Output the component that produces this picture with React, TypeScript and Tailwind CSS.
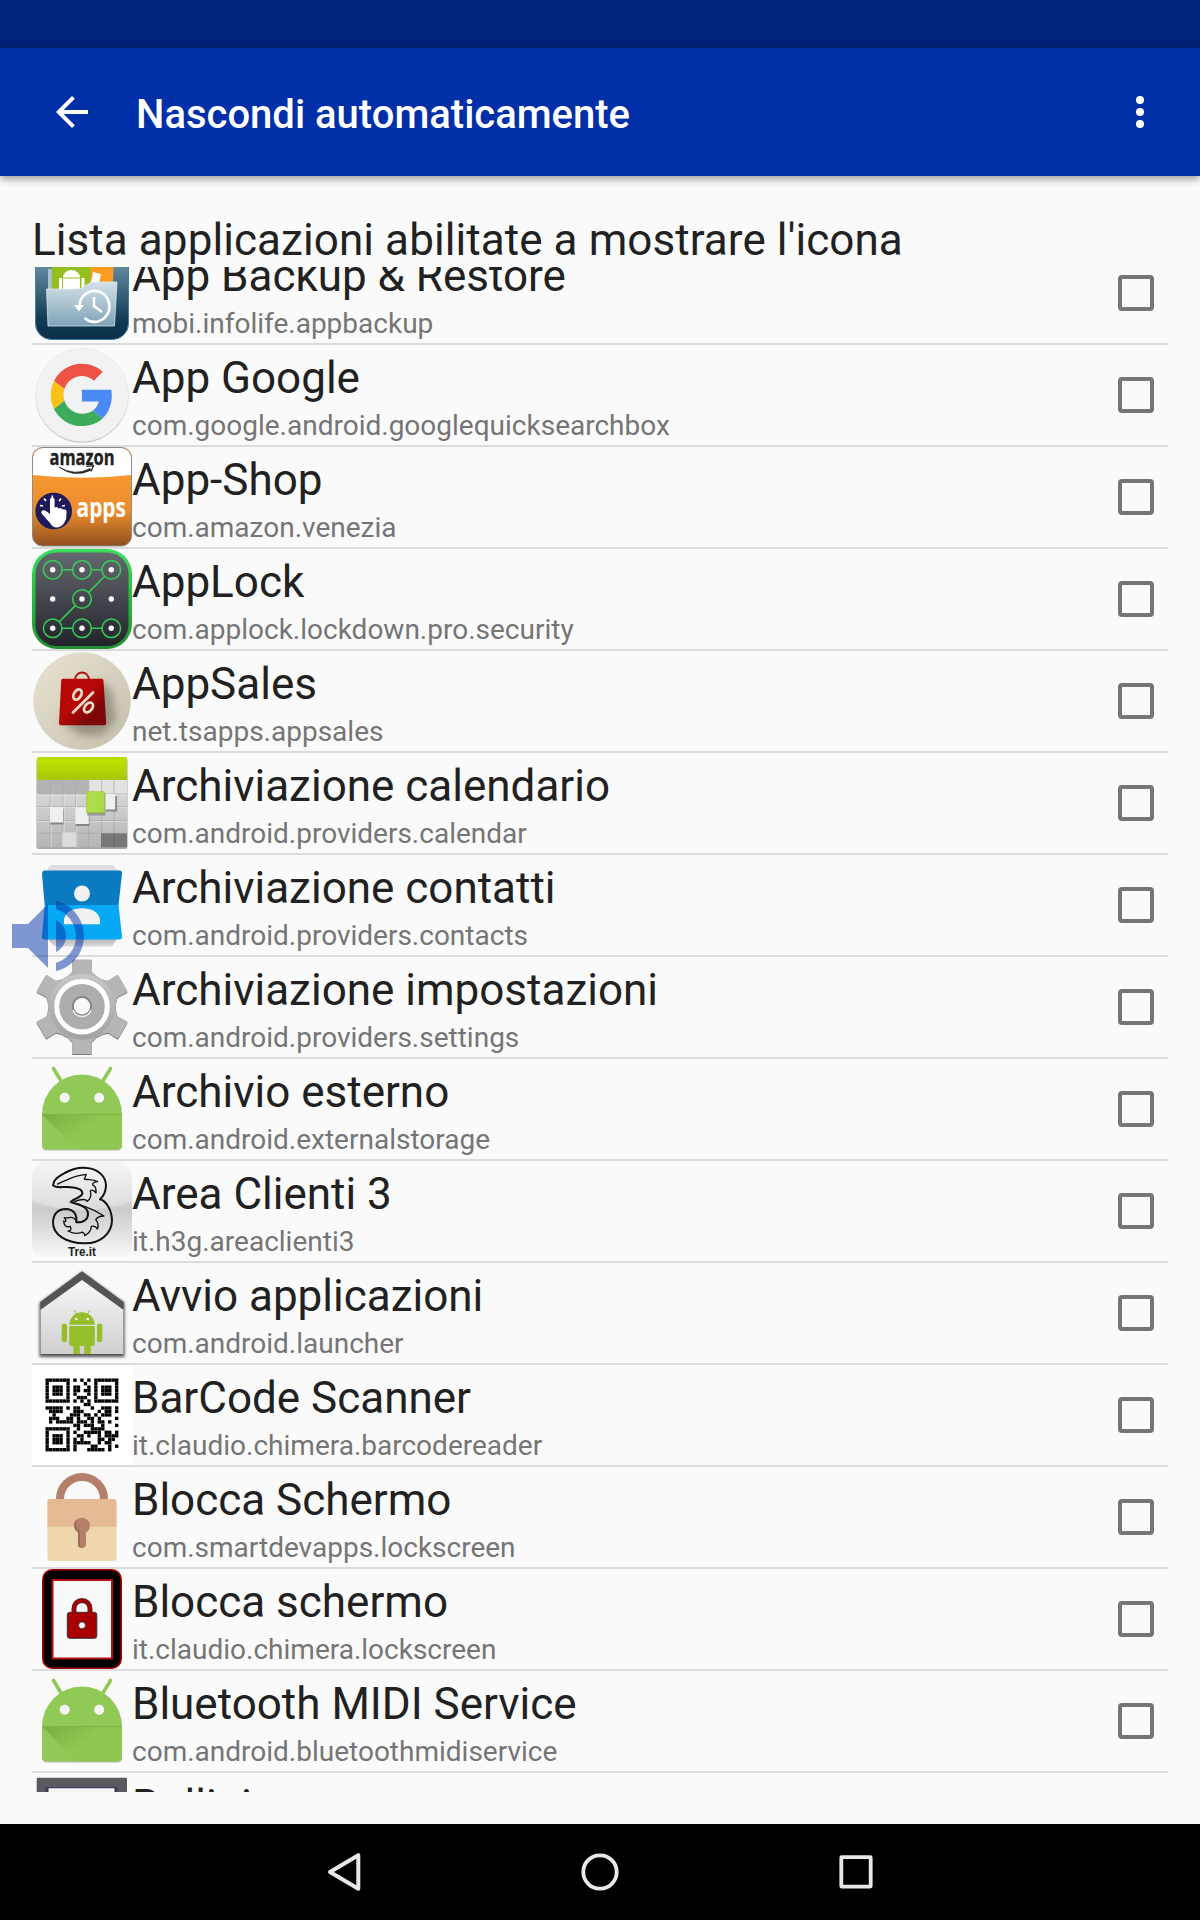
import React from 'react';

const BackupIcon = () => (
  <svg viewBox="0 0 100 100" className="w-full h-full">
    <defs>
      <linearGradient id="bkBg" x1="0" y1="0" x2="0" y2="1">
        <stop offset="0.2" stopColor="#648a9f" />
        <stop offset="0.8" stopColor="#0f3a52" />
        <stop offset="1" stopColor="#0a3048" />
      </linearGradient>
      <linearGradient id="bkFolder" x1="0" y1="0" x2="0" y2="1">
        <stop offset="0" stopColor="#d3e1e8" />
        <stop offset="1" stopColor="#7fa3b8" />
      </linearGradient>
    </defs>
    <rect x="3.500" y="3.500" width="93" height="93" rx="16" fill="url(#bkBg)" stroke="#3f7f9f" strokeWidth="1" />
    <path d="M16 26h6v24h-6z" fill="#a9c2cd" />
    <path d="M19.700 10H60v38H19.700z" fill="#94bd20" />
    <path d="M60 10h22l-1 30H58z" fill="#ff9b21" />
    <path d="M61 29l8 2-3 14h-8z" fill="#fff" />
    <path d="M31 34.500a8.500 7.500 0 0 1 17 0zM31 35.500h17v12H31zM27 35h3v11h-3zM49.500 35h3v11h-3z" fill="#fff" />
    <path d="M14.500 46h31l4-1 10-6h25.500l-2.500 44H16z" fill="url(#bkFolder)" stroke="#e5eff4" strokeWidth="0.7" />
    <path d="M47.500 62a15 15.500 0 1 1 5 13" fill="none" stroke="#fff" strokeWidth="2.600" />
    <path d="M42 62h10l-5 6.500z" fill="#fff" />
    <path d="M62 54v9l8 6" fill="none" stroke="#fff" strokeWidth="2.600" />
  </svg>
);

const GoogleIcon = () => (
  <svg viewBox="0 0 100 100" className="w-full h-full">
    <circle cx="50" cy="51.200" r="46.500" fill="#c4c4c4" />
    <circle cx="50" cy="50" r="46.500" fill="#f2f2f2" stroke="#e4e4e4" strokeWidth="0.600" />
    <g transform="translate(18.700 18.700) scale(1.300)">
      <path fill="#ee5145" d="M24 9.500c3.540 0 6.710 1.220 9.210 3.600l6.850-6.850C35.900 2.380 30.470 0 24 0 14.620 0 6.510 5.380 2.560 13.220l7.980 6.190C12.430 13.720 17.740 9.500 24 9.500z" />
      <path fill="#4a8af4" d="M46.980 24.550c0-1.570-.15-3.090-.38-4.550H24v9.020h12.940c-.58 2.960-2.260 5.480-4.780 7.180l7.730 6c4.510-4.180 7.090-10.360 7.090-17.650z" />
      <path fill="#fbc117" d="M10.530 28.590c-.48-1.450-.76-2.990-.76-4.590s.27-3.140.76-4.590l-7.980-6.190C.92 16.460 0 20.120 0 24c0 3.880.92 7.540 2.560 10.780l7.970-6.190z" />
      <path fill="#3cab5b" d="M24 48c6.480 0 11.930-2.130 15.890-5.810l-7.730-6c-2.150 1.450-4.920 2.300-8.160 2.300-6.260 0-11.570-4.220-13.470-9.910l-7.980 6.190C6.510 42.620 14.620 48 24 48z" />
    </g>
  </svg>
);

const AmazonIcon = () => (
  <svg viewBox="0 0 100 100" className="w-full h-full">
    <defs>
      <linearGradient id="amzBg" x1="0" y1="0" x2="0" y2="1">
        <stop offset="0.3" stopColor="#f8972f" />
        <stop offset="0.65" stopColor="#e98c2e" />
        <stop offset="1" stopColor="#91501f" />
      </linearGradient>
    </defs>
    <rect x="0.500" y="0.500" width="99" height="98.500" rx="10" fill="url(#amzBg)" />
    <path d="M1 28V11A10 10 0 0 1 11 1h78a10 10 0 0 1 10 10v17Q50 33.500 1 28z" fill="#fff" />
    <rect x="0.500" y="0.500" width="99" height="98.500" rx="10" fill="none" stroke="#8b8b8b" strokeWidth="1" />
    <text x="17.500" y="18" textLength="65" lengthAdjust="spacingAndGlyphs" className="font-['Open_Sans'] font-bold" fontSize="21.500" fill="#222" stroke="#222" strokeWidth="0.400">amazon</text>
    <path d="M27 20q16 9.500 31 1.500l1 1.800q-17 8-32-3.300z" fill="#222" stroke="#222" strokeWidth="0.600" />
    <path d="M54.500 19.300l7-.6-2.500 5.800" fill="none" stroke="#222" strokeWidth="1.300" />
    <circle cx="21.700" cy="64" r="18.300" fill="#1f1b5b" />
    <path d="M18 76l-8-9c-2-3 1-5 4-3l4 3V52q2.300-3 4.600 0v9q2-2 4 .500 2.500-1.500 4 1 3-1 4 1.500l-.500 8q-3 8-9 8.500-4 .500-7.100-4.500z" fill="#fff" />
    <path d="M20.300 52v-3.500M14 54l-2-2.500M27 54l2-2.500M11 59l-3-.500M30 59l3-.500" stroke="#fff" strokeWidth="1.700" fill="none" />
    <text x="44.500" y="70" textLength="49.500" lengthAdjust="spacingAndGlyphs" className="font-['Open_Sans'] font-bold" fontSize="26.500" fill="#fff">apps</text>
  </svg>
);

const AppLockIcon = () => {
  const p = [20.7, 50, 79.3];
  return (
    <svg viewBox="0 0 100 100" className="w-full h-full">
      <defs>
        <linearGradient id="alRim" x1="0" y1="0" x2="0" y2="1">
          <stop offset="0" stopColor="#3ade5a" />
          <stop offset="1" stopColor="#1f8f31" />
        </linearGradient>
        <linearGradient id="alBg" x1="0" y1="0" x2="0" y2="1">
          <stop offset="0" stopColor="#666870" />
          <stop offset="1" stopColor="#23242b" />
        </linearGradient>
      </defs>
      <rect width="100" height="100" rx="25" fill="url(#alRim)" />
      <rect x="3.500" y="3.500" width="93" height="93.500" rx="21" fill="url(#alBg)" />
      <g fill="none" stroke="#35cf55" strokeWidth="1.500">
        {p.map(x => <circle key={x} cx={x} cy="20.700" r="9.300" />)}
        {p.map(x => <circle key={x} cx={x} cy="79.300" r="9.300" />)}
        <circle cx="50" cy="50" r="9.300" />
        <path d="M30 20.700h10.700M59.300 20.700H70M30 79.300h10.700M59.300 79.300H70M72.700 27.300L56.600 43.400M43.400 56.600L27.300 72.700" />
      </g>
      {p.map(y => p.map(x => <circle key={`${x}-${y}`} cx={x} cy={y} r="2.700" fill="#fff" />))}
    </svg>
  );
};

const AppSalesIcon = () => (
  <svg viewBox="0 0 100 100" className="w-full h-full">
    <defs>
      <linearGradient id="asBg" x1="0" y1="0" x2="1" y2="1">
        <stop offset="0.2" stopColor="#e2dccb" />
        <stop offset="1" stopColor="#c5bfae" />
      </linearGradient>
      <linearGradient id="asBag" x1="0" y1="0" x2="1" y2="1">
        <stop offset="0.45" stopColor="#b80707" />
        <stop offset="0.75" stopColor="#7d0606" />
      </linearGradient>
      <filter id="asSoft" x="-40%" y="-40%" width="180%" height="180%">
        <feGaussianBlur stdDeviation="4" />
      </filter>
    </defs>
    <circle cx="50" cy="50" r="48.700" fill="url(#asBg)" />
    <path d="M68 30l11 9 5 30-14 15H48L29 70z" fill="#6b6452" opacity="0.550" filter="url(#asSoft)" />
    <path d="M43 29a7 7.500 0 0 1 14 0" fill="none" stroke="#b01212" strokeWidth="1.800" />
    <path d="M31 27.700h38.500q2 0 2 2l2.700 42.600q0 2-2 2H29q-2.200 0-2-2l2.200-42.600q0-2 1.800-2z" fill="url(#asBag)" />
    <g fill="none" stroke="#e8dcc8" strokeWidth="2.800">
      <path d="M61 41.500L41 61.500" strokeLinecap="round" />
      <ellipse cx="45.500" cy="43.500" rx="3.600" ry="5.500" transform="rotate(30 45.500 43.500)" />
      <ellipse cx="56.500" cy="56.500" rx="3.600" ry="5.500" transform="rotate(40 56.500 56.500)" />
    </g>
  </svg>
);

const CalendarIcon = () => (
  <svg viewBox="0 0 100 100" className="w-full h-full">
    <defs>
      <linearGradient id="calTop" x1="0" y1="0" x2="0" y2="1">
        <stop offset="0" stopColor="#b3d600" />
        <stop offset="0.15" stopColor="#c0e200" />
        <stop offset="1" stopColor="#a3c708" />
      </linearGradient>
      <linearGradient id="calBody" x1="0" y1="0" x2="0" y2="1">
        <stop offset="0" stopColor="#dedede" />
        <stop offset="1" stopColor="#b5b5b5" />
      </linearGradient>
    </defs>
    <rect x="4.500" y="5" width="91" height="91" rx="2.500" fill="#a5a5a5" />
    <rect x="5" y="27" width="90" height="67.500" fill="url(#calBody)" />
    <path d="M5 27h51.700v14H5z" fill="#b3b3b3" />
    <path d="M56.700 27H95v14H56.700z" fill="#e3e3e3" />
    <path d="M18.300 27v67M31 27v67M43.700 27v67M56.700 27v67M69.700 27v67M82 27v67M5 41h90M5 53.700h90M5 67.700h90M5 80.300h90" stroke="#a9a9a9" strokeWidth="0.800" fill="none" />
    <path d="M5 42h90M5 54.700h90M5 68.700h90M19.200 41v53M32 41v53M44.700 41v53" stroke="#ededed" strokeWidth="0.600" fill="none" />
    <path d="M7 4h86q2 0 2 2v21H5V6q0-2 2-2z" fill="url(#calTop)" />
    <rect x="69" y="80.300" width="26" height="14" fill="#777" />
    <path d="M82 80.300v14" stroke="#666" strokeWidth="0.800" />
    <g fill="#858585">
      <rect x="18.500" y="56" width="13" height="15.500" />
      <rect x="44" y="57" width="13.500" height="16" />
      <rect x="74" y="43" width="11" height="15.500" />
    </g>
    <g fill="#efefef">
      <rect x="18" y="54" width="13" height="15.500" />
      <rect x="43.300" y="54.500" width="13.500" height="16.500" />
      <rect x="72.700" y="41" width="10.500" height="15.500" />
      <rect x="30.300" y="79.300" width="13.500" height="14.500" fill="#dcdcdc" />
    </g>
    <rect x="55" y="40.500" width="18.500" height="22" fill="#787878" opacity="0.600" />
    <rect x="54.700" y="38.700" width="17.500" height="21" fill="#addb4c" stroke="#9ccb2f" strokeWidth="0.800" />
  </svg>
);

const ContactsIcon = () => (
  <svg viewBox="0 0 100 100" className="w-full h-full">
    <defs>
      <linearGradient id="ctBack" x1="0" y1="0" x2="0" y2="1">
        <stop offset="0.88" stopColor="#a9a9a9" />
        <stop offset="1" stopColor="#dcdcdc" />
      </linearGradient>
    </defs>
    <path d="M20 10h60l5 6v68l-5 7.500H22L16 84V16z" fill="url(#ctBack)" />
    <path d="M20 10h60q3 1 5 6H15q2-5 5-6z" fill="#dfdfdf" />
    <path d="M12 15.500h76q2.500.500 2 3.500L86.500 50h-73.800L10 19q-.200-3 2-3.500z" fill="#0b7bc1" />
    <path d="M12.700 50h73.800l3.500 31q.300 3-2 3.500H12q-2.300-.500-2-3.500z" fill="#08a9f4" />
    <circle cx="50" cy="38.500" r="8" fill="#f1f1f1" />
    <path d="M32 69.300V64q3-10.500 18-10.700Q65 53.500 68 64v5.300z" fill="#f1f1f1" />
  </svg>
);

const GearIcon = () => (
  <svg viewBox="0 0 100 100" className="w-full h-full">
    <defs>
      <linearGradient id="gearFill" x1="0" y1="0" x2="0" y2="1">
        <stop offset="0" stopColor="#c6c6c6" />
        <stop offset="1" stopColor="#a2a2a2" />
      </linearGradient>
    </defs>
    {/* dark copy sits one pixel lower and reads as the bottom bevel */}
    {['#7b7b7b', '#b5b5b5'].map((color, i) => (
      <g key={color} transform={`translate(0 ${1 - i})`} fill={color}>
        <circle cx="50" cy="49.700" r="34" />
        {[0, 60, 120, 180, 240, 300].map(a => (
          <path key={a} transform={`rotate(${a} 50 49.700)`} d="M36 18q4-2 4.500-5L40 4q0-1.500 1.500-1.500h17Q60 2.500 60 4l-.500 9q.500 3 4.500 5z" />
        ))}
      </g>
    ))}
    <circle cx="50" cy="49.700" r="33" fill="url(#gearFill)" />
    <circle cx="50" cy="49.700" r="25.300" fill="#adadad" stroke="#fff" strokeWidth="5" />
    <circle cx="50" cy="49.200" r="9.200" fill="#fafafa" stroke="#858585" strokeWidth="2" />
    <path d="M41 53a9.500 9.500 0 0 0 18 0" fill="none" stroke="#efefef" strokeWidth="1.500" />
  </svg>
);

const AndroidIcon = () => (
  <svg viewBox="0 0 100 100" className="w-full h-full">
    <defs>
      <linearGradient id="droidShade" x1="0" y1="0" x2="1" y2="0.6">
        <stop offset="0" stopColor="#7cae42" />
        <stop offset="0.6" stopColor="#8fc750" />
      </linearGradient>
    </defs>
    <path d="M10 60h80v26.500q0 5-5 5H15q-5 0-5-5z" fill="#b9b9b9" />
    <path d="M21.500 9.500L30 23.500M78.500 9.500L70 23.500" stroke="#90c956" strokeWidth="3.600" strokeLinecap="round" />
    <path d="M10 55.500a40 40 0 0 1 80 0v30q0 5-5 5H15q-5 0-5-5z" fill="#90c956" />
    <path d="M10 55.500h80v30q0 5-5 5H45z" fill="url(#droidShade)" />
    <path d="M10 55.500h80" stroke="#7fb246" strokeWidth="1" />
    <circle cx="32.700" cy="38.700" r="5" fill="#f5f5f5" />
    <circle cx="67.200" cy="38.700" r="5" fill="#f5f5f5" />
  </svg>
);

const TreIcon = () => (
  <svg viewBox="0 0 100 100" className="w-full h-full">
    <defs>
      <linearGradient id="treBg" x1="0" y1="0" x2="0" y2="1">
        <stop offset="0" stopColor="#f3f3f3" />
        <stop offset="0.5" stopColor="#cccccc" />
        <stop offset="1" stopColor="#fcfcfc" />
      </linearGradient>
    </defs>
    <rect width="100" height="100" rx="16" fill="url(#treBg)" />
    <path d="M0 40V16A16 16 0 0 1 16 0h68a16 16 0 0 1 16 16v24Q50 58 0 40z" fill="#fff" opacity="0.300" />
    <g transform="translate(0 -1) scale(.3333)" fill="none" stroke="#111" strokeLinejoin="round">
      <path
        d="M63 76C64 58 80 50 98 39C120 27 142 21 165 24C200 27 222 50 222 78C221 98 213 110 204 118C222 122 240 150 240 183C238 222 205 249 160 250C105 251 62 225 63 187C64 160 80 148 102 147C124 148 136 162 133 187C157 188 169 176 168 160C167 142 145 134 116 126C122 116 147 114 151 101C153 86 130 82 105 81C85 81 68 84 63 76Z"
        strokeWidth="6"
      />
      <path
        d="M75 73C100 62 120 50 145 46L163 43L157 57C170 61 180 56 197 65C185 65 181 70 182 75C190 78 193 89 192 99C187 91 180 90 175 92C179 108 174 119 165 124C161 115 145 118 126 125M139 132C160 142 180 143 216 168C202 168 195 173 191 179C198 187 200 198 196 207C190 197 183 198 178 199C178 212 170 221 158 227C159 219 151 215 146 218C134 223 120 219 108 213C118 214 118 205 115 199C102 204 95 194 95 183C104 189 103 178 97 173C107 176 112 171 119 172C132 174 130 184 138 188"
        strokeWidth="4"
      />
    </g>
    <text x="36" y="94.500" textLength="28" lengthAdjust="spacingAndGlyphs" className="font-['Liberation_Sans'] font-bold" fontSize="12.500" fill="#222">Tre.it</text>
  </svg>
);

const HomeIcon = () => (
  <svg viewBox="0 0 100 100" className="w-full h-full">
    <defs>
      <linearGradient id="homeWall" x1="0" y1="0" x2="0" y2="1">
        <stop offset="0" stopColor="#fafafa" />
        <stop offset="1" stopColor="#cfcfcf" />
      </linearGradient>
      <filter id="homeSoft" x="-20%" y="-20%" width="140%" height="140%">
        <feGaussianBlur stdDeviation="1.5" />
      </filter>
    </defs>
    <path d="M50 9l42.500 31v54H7.500V40z" fill="#555" filter="url(#homeSoft)" />
    <path d="M8.700 40L50 12l41.300 28v51H8.700z" fill="url(#homeWall)" />
    <path d="M50 8.300L91.700 39v8L50 17 8.300 47v-8z" fill="#545454" />
    <g fill="#94be2a">
      <path d="M37.300 61.700a12.700 12.400 0 0 1 25.400 0zM37.300 63h25.400v18q0 2-2 2H39.300q-2 0-2-2z" />
      <rect x="29.700" y="60.500" width="5.300" height="18.500" rx="2.600" />
      <rect x="65" y="60.500" width="5.300" height="18.500" rx="2.600" />
      <path d="M41.300 82h6.500v9h-6.500zM52.200 82h6.500v9h-6.500z" />
      <path d="M42 47l2.500 4M58 47l-2.500 4" stroke="#94be2a" strokeWidth="1" />
    </g>
    <circle cx="44.300" cy="56" r="1.300" fill="#fff" />
    <circle cx="55.700" cy="56" r="1.300" fill="#fff" />
  </svg>
);

const QR_ROWS = [
  '#######.#.#.#.#######',
  '#.....#....#..#.....#',
  '#.###.#.##..#.#.###.#',
  '#.###.#.##.##.#.###.#',
  '#.###.#.#...#.#.###.#',
  '#.....#..###..#.....#',
  '#######.#.#.#.#######',
  '...........##........',
  '#####.#.##...#..###.#',
  '.####...###....#.##.#',
  '..#....###.##.#.###..',
  '.###..##.#..##.#....#',
  '.#.#####.###.#.##.#..',
  '........##.###..#...#',
  '#######..#...####....',
  '#.....#.#..#####.##.#',
  '#.###.#..##.#..#.####',
  '#.###.#.#.#....##.##.',
  '#.###.#.#####..#.##..',
  '#.....#.#....##...#.#',
  '#######.#...#####.#..',
];

const QrIcon = () => (
  <svg viewBox="0 0 100 100" className="w-full h-full">
    <rect width="100" height="100" fill="#fff" />
    <g transform="translate(13.500 13.500) scale(3.476)">
      {QR_ROWS.map((row, y) =>
        row.split('').map((c, x) => (c === '#' ? <rect key={`${x}-${y}`} x={x} y={y} width="0.970" height="0.970" fill="#000" /> : null))
      )}
    </g>
  </svg>
);

const PadlockIcon = () => (
  <svg viewBox="0 0 100 100" className="w-full h-full">
    <path d="M28 34v-2a22 22 0 0 1 44 0v2" fill="none" stroke="#b5806b" strokeWidth="8" />
    <rect x="15.500" y="32" width="69" height="62" rx="3" fill="#eed7ad" />
    <path d="M15.500 59.700V35q0-3 3-3h63q3 0 3 3v24.700z" fill="#e6ba95" />
    <circle cx="50" cy="58.700" r="8" fill="#b5806b" />
    <path d="M46 62h8v15a4 4 0 0 1-8 0z" fill="#b5806b" />
    <path d="M45 52a8 8 0 0 0 1 13v12q0 3 3 4-1-1-1-4V64q-6-5-3-12z" fill="#9c6a57" />
  </svg>
);

const RedLockIcon = () => (
  <svg viewBox="0 0 100 100" className="w-full h-full">
    <rect x="10.800" y="0.800" width="78.400" height="98.400" rx="9.500" fill="#000" stroke="#a80000" strokeWidth="1.600" />
    <rect x="20.500" y="11" width="59.500" height="78.500" fill="#fafafa" stroke="#b01010" strokeWidth="2" />
    <path d="M42 44v-4.500a8 8 0 0 1 16 0V44" fill="none" stroke="#333" strokeWidth="5" />
    <rect x="35.300" y="43.300" width="29.500" height="26" rx="2.500" fill="#a80000" stroke="#333" strokeWidth="1" />
    <path d="M42 45v-5.500a8 8 0 0 1 16 0V45" fill="none" stroke="#a80000" strokeWidth="3.600" />
    <circle cx="50" cy="56.300" r="3.400" fill="#fff" stroke="#333" strokeWidth="0.800" />
  </svg>
);

const FrameIcon = () => (
  <svg viewBox="0 0 100 100" className="w-full h-full">
    <rect x="4.700" y="4.700" width="90.300" height="90.300" rx="1" fill="#5a5962" />
    <path d="M13.500 14h72v72h-72z" fill="#3d3a5c" />
    <path d="M16.500 15.300h66v68h-66z" fill="#f4f4f6" />
  </svg>
);

const apps = [
  { name: 'App Backup & Restore', pkg: 'mobi.infolife.appbackup', icon: BackupIcon },
  { name: 'App Google', pkg: 'com.google.android.googlequicksearchbox', icon: GoogleIcon },
  { name: 'App-Shop', pkg: 'com.amazon.venezia', icon: AmazonIcon },
  { name: 'AppLock', pkg: 'com.applock.lockdown.pro.security', icon: AppLockIcon },
  { name: 'AppSales', pkg: 'net.tsapps.appsales', icon: AppSalesIcon },
  { name: 'Archiviazione calendario', pkg: 'com.android.providers.calendar', icon: CalendarIcon },
  { name: 'Archiviazione contatti', pkg: 'com.android.providers.contacts', icon: ContactsIcon },
  { name: 'Archiviazione impostazioni', pkg: 'com.android.providers.settings', icon: GearIcon },
  { name: 'Archivio esterno', pkg: 'com.android.externalstorage', icon: AndroidIcon },
  { name: 'Area Clienti 3', pkg: 'it.h3g.areaclienti3', icon: TreIcon },
  { name: 'Avvio applicazioni', pkg: 'com.android.launcher', icon: HomeIcon },
  { name: 'BarCode Scanner', pkg: 'it.claudio.chimera.barcodereader', icon: QrIcon },
  { name: 'Blocca Schermo', pkg: 'com.smartdevapps.lockscreen', icon: PadlockIcon },
  { name: 'Blocca schermo', pkg: 'it.claudio.chimera.lockscreen', icon: RedLockIcon },
  { name: 'Bluetooth MIDI Service', pkg: 'com.android.bluetoothmidiservice', icon: AndroidIcon },
  { name: 'Bollini', pkg: '', icon: FrameIcon },
];

const AppRow = ({ name, pkg, icon: Icon }: any) => (
  <div className="h-[102px] shrink-0 flex items-start border-b-2 border-[#dbdbdb]">
    <div className="w-[100px] h-[100px] shrink-0">
      <Icon />
    </div>
    <div className="flex-1 pt-[7px] whitespace-nowrap">
      <div className="text-[44px] leading-[52px] text-[#212121]">{name}</div>
      <div className="mt-[5px] text-[28px] leading-[33px] text-[#757575]">{pkg}</div>
    </div>
    <div className="w-9 h-9 mt-8 mr-[14px] border-4 border-[#757575] rounded-[4px]" />
  </div>
);

const App: React.FC = () => (
  <div className="relative w-[1200px] h-[1920px] flex flex-col bg-[#fafafa] font-[Roboto,sans-serif] overflow-hidden">
    <div className="h-12 shrink-0 bg-[#002279]" />
    <header className="h-32 shrink-0 flex items-center pl-12 pr-9 bg-[#002fa7] text-white shadow-[0_3px_8px_rgba(0,0,0,0.4)]">
      <svg viewBox="0 0 24 24" className="w-12 h-12" fill="currentColor">
        <path d="M20 11H7.830l5.590-5.590L12 4l-8 8 8 8 1.410-1.410L7.830 13H20v-2z" />
      </svg>
      <h1 className="flex-1 ml-10 mt-1.5 text-[40px] leading-[48px] font-medium">Nascondi automaticamente</h1>
      <svg viewBox="0 0 24 24" className="w-12 h-12" fill="currentColor">
        <circle cx="12" cy="6" r="2" />
        <circle cx="12" cy="12" r="2" />
        <circle cx="12" cy="18" r="2" />
      </svg>
    </header>

    <main className="flex-1 min-h-0 flex flex-col px-8 pb-8">
      <h2 className="h-[91px] shrink-0 pt-[38px] text-[44px] leading-[52px] tracking-[0.08px] text-[#212121] whitespace-nowrap">
        Lista applicazioni abilitate a mostrare l'icona
      </h2>
      <div className="flex-1 min-h-0 overflow-hidden">
        <div className="-mt-6 flex flex-col">
          {apps.map(app => (
            <AppRow key={app.name} {...app} />
          ))}
        </div>
      </div>
    </main>

    {/* floating volume button, half transparent over the list */}
    <svg viewBox="0 0 24 24" className="absolute left-0 top-[888px] w-24 h-24" fill="#002fa7" fillOpacity="0.500">
      <path d="M3 9v6h4l5 5V4L7 9H3zm13.500 3c0-1.770-1.020-3.290-2.500-4.030v8.050c1.480-.730 2.500-2.250 2.500-4.020zM14 3.230v2.060c2.890.860 5 3.540 5 6.710s-2.110 5.850-5 6.710v2.060c4.010-.910 7-4.490 7-8.770s-2.990-7.860-7-8.770z" />
    </svg>

    <nav className="h-24 shrink-0 flex items-center justify-center gap-40 bg-black">
      <svg viewBox="0 0 96 96" className="w-24 h-24" fill="none" stroke="#e8e8e8" strokeWidth="4" strokeLinejoin="round">
        <path d="M62.300 31.200v33.600L34 48z" />
      </svg>
      <svg viewBox="0 0 96 96" className="w-24 h-24" fill="none" stroke="#e8e8e8" strokeWidth="3.800">
        <circle cx="48" cy="48" r="16.700" />
      </svg>
      <svg viewBox="0 0 96 96" className="w-24 h-24" fill="none" stroke="#e8e8e8" strokeWidth="3.800">
        <rect x="33.300" y="33.200" width="29.400" height="29.400" rx="0.500" />
      </svg>
    </nav>
  </div>
);

export default App;
